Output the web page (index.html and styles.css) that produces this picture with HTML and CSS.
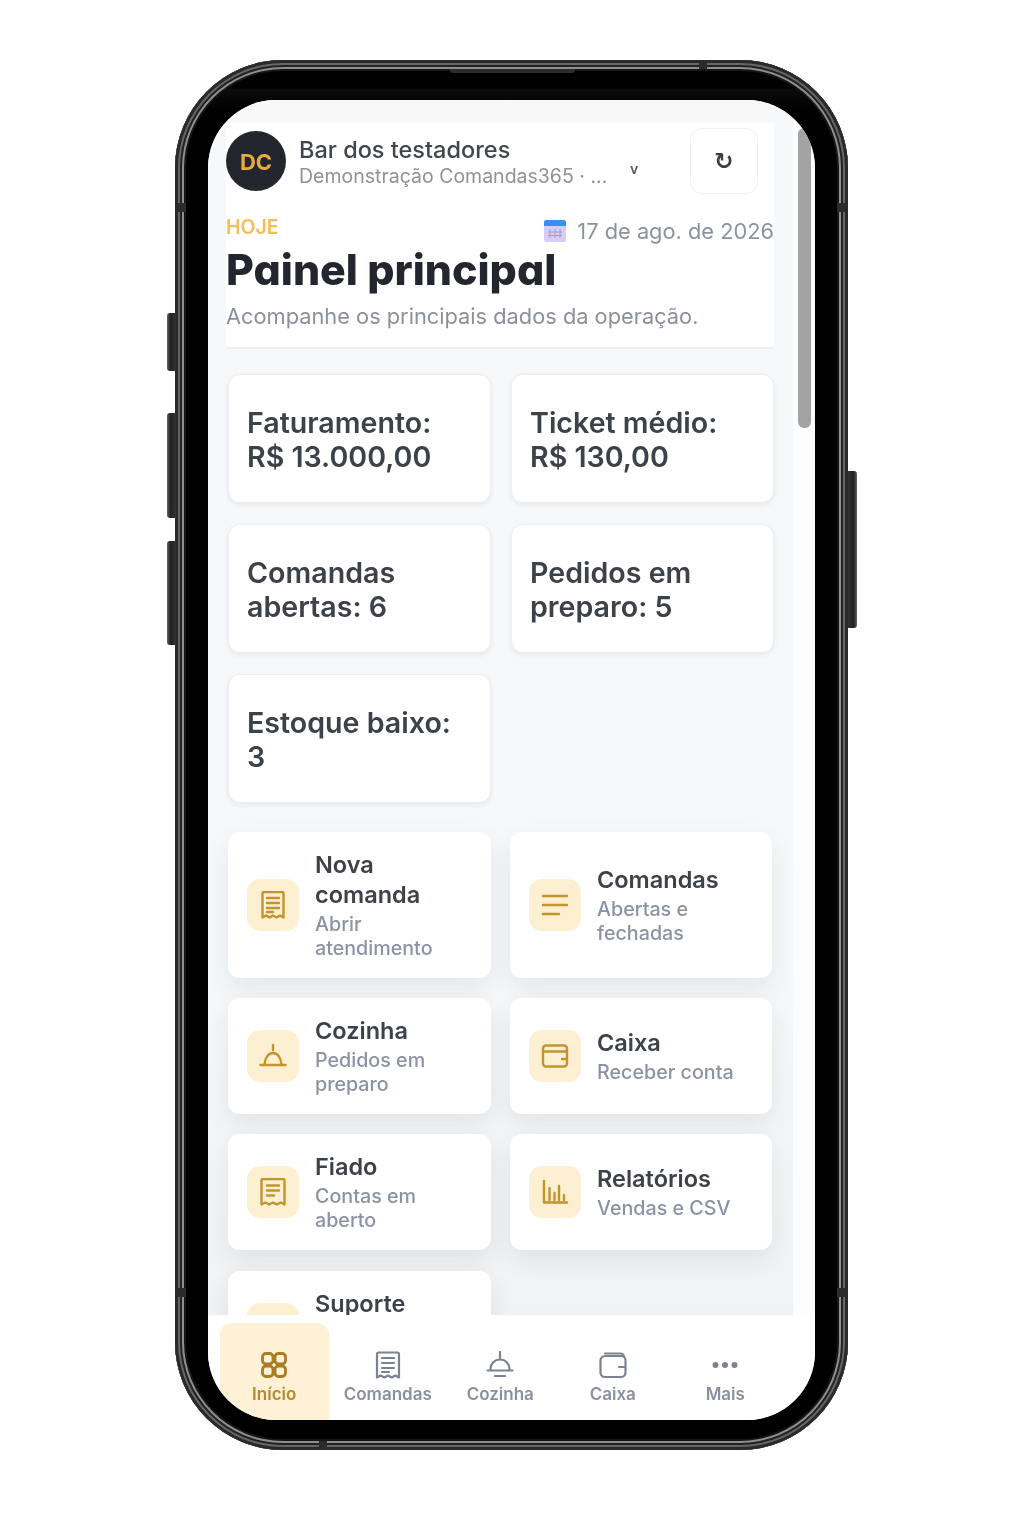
FILE: index.html
```html
<!DOCTYPE html>
<html lang="pt-BR">
<head>
<meta charset="utf-8">
<title>Painel principal</title>
<link rel="stylesheet" href="styles.css">
</head>
<body>
<div class="phone">
  <span class="side side-a"></span><span class="side side-b"></span><span class="side side-c"></span><span class="side side-d"></span>
  <span class="band band-lt"></span><span class="band band-rt"></span><span class="band band-lb"></span><span class="band band-rb"></span><span class="band band-t"></span><span class="band band-b"></span>
  <span class="speaker"></span>
  <div class="bezel">
    <div class="screen">
      <div class="body">
        <main class="main">
          <section class="top">
            <header class="account">
              <div class="avatar">DC</div>
              <div class="account-text">
                <div class="account-name">Bar dos testadores</div>
                <div class="account-sub">Demonstração Comandas365 · ...</div>
              </div>
              <span class="chev">v</span>
              <button class="refresh">↻</button>
            </header>
            <div class="meta">
              <span class="today">HOJE</span>
              <span class="date">
                <svg class="cal" viewBox="0 0 22 22"><rect y="0" width="22" height="22" rx="2.500" fill="#d8cdf2"/><path d="M0 2.500A2.500 2.500 0 0 1 2.500 0h17A2.500 2.500 0 0 1 22 2.500V6H0z" fill="#3b8df0"/><path d="M6 9v9M11 9v9M16 9v9M4 12h14M4 15.500h14" stroke="#a79cc8" stroke-width="1" fill="none"/></svg>
                17 de ago. de 2026
              </span>
            </div>
            <h1 class="title">Painel principal</h1>
            <p class="lead">Acompanhe os principais dados da operação.</p>
          </section>

          <section class="stats">
            <div class="stat">Faturamento:<br>R$ 13.000,00</div>
            <div class="stat">Ticket médio:<br>R$ 130,00</div>
            <div class="stat">Comandas<br>abertas: 6</div>
            <div class="stat">Pedidos em<br>preparo: 5</div>
            <div class="stat">Estoque baixo:<br>3</div>
          </section>

          <section class="actions">
            <a class="action">
              <span class="tile"><svg viewBox="0 0 28 28"><path d="M3.500 26.500V2.500A1.500 1.500 0 0 1 5 1h18a1.500 1.500 0 0 1 1.500 1.500v24l-3.500-2-3.500 2-3.500-2-3.500 2-3.500-2z"/><path d="M8 7h12M8 12h12M8 17h12M8 21h6"/></svg></span>
              <span class="action-text"><strong>Nova comanda</strong><small>Abrir atendimento</small></span>
            </a>
            <a class="action">
              <span class="tile"><svg viewBox="0 0 28 28"><path d="M2 5h24M2 14h24M2 23h16"/></svg></span>
              <span class="action-text"><strong>Comandas</strong><small>Abertas e fechadas</small></span>
            </a>
            <a class="action">
              <span class="tile"><svg viewBox="0 0 28 28"><path d="M14 3v5M5.500 22.500C6 15.500 9.500 11 14 11s8 4.500 8.500 11.500M1.500 23h25"/></svg></span>
              <span class="action-text"><strong>Cozinha</strong><small>Pedidos em preparo</small></span>
            </a>
            <a class="action">
              <span class="tile"><svg viewBox="0 0 28 28"><rect x="2" y="3.500" width="24" height="21" rx="3"/><path d="M2 9.500h24M21 17h5"/></svg></span>
              <span class="action-text"><strong>Caixa</strong><small>Receber conta</small></span>
            </a>
            <a class="action">
              <span class="tile"><svg viewBox="0 0 28 28"><path d="M2.500 26.500V2.500A1.500 1.500 0 0 1 4 1h20a1.500 1.500 0 0 1 1.500 1.500v24l-3.800-2-3.800 2-3.900-2-3.900 2-3.800-2z"/><path d="M8 7.500h12M8 12.500h12M8 17.500h7"/></svg></span>
              <span class="action-text"><strong>Fiado</strong><small>Contas em aberto</small></span>
            </a>
            <a class="action">
              <span class="tile"><svg viewBox="0 0 28 28"><path d="M3 3v21.500h23M8.500 22V10M13.500 22v-7M18 22V8M23 22v-5"/></svg></span>
              <span class="action-text"><strong>Relatórios</strong><small>Vendas e CSV</small></span>
            </a>
            <a class="action action-cut">
              <span class="tile"></span>
              <span class="action-text"><strong>Suporte</strong></span>
            </a>
          </section>
        </main>
        <aside class="gutter"><span class="thumb"></span></aside>
      </div>
      <nav class="nav">
        <a class="tab tab-on"><svg viewBox="0 0 28 28"><rect x="2.500" y="2.500" width="10.500" height="10.500" rx="3.500"/><rect x="15" y="2.500" width="10.500" height="10.500" rx="3.500"/><rect x="2.500" y="15" width="10.500" height="10.500" rx="3.500"/><rect x="15" y="15" width="10.500" height="10.500" rx="3.500"/></svg>Início</a>
        <a class="tab"><svg viewBox="0 0 28 28"><path d="M3 26.500V3A1.500 1.500 0 0 1 4.500 1.500h19A1.500 1.500 0 0 1 25 3v23.500l-3.600-2-3.700 2-3.700-2-3.700 2-3.700-2z"/><path d="M8 7h12M8 12h12M8 17h12M8 21h7"/></svg>Comandas</a>
        <a class="tab"><svg viewBox="0 0 28 28"><path d="M14 1v6M4.500 18a9.500 9.500 0 0 1 19 0M1.500 19.500h25M9 25h10"/></svg>Cozinha</a>
        <a class="tab"><svg viewBox="0 0 28 28"><path d="M6 2.500h15.500A3.500 3.500 0 0 1 25 6"/><rect x="1.500" y="5" width="25" height="21" rx="4.500"/><path d="M20 16h6"/></svg>Caixa</a>
        <a class="tab"><svg viewBox="0 0 28 28"><circle class="dot" cx="4.500" cy="14" r="3"/><circle class="dot" cx="14" cy="14" r="3"/><circle class="dot" cx="23.500" cy="14" r="3"/></svg>Mais</a>
      </nav>
    </div>
  </div>
</div>
</body>
</html>
```
FILE: styles.css
```css
* { box-sizing: border-box; }
html, body { margin: 0; background: #fff; }
body { padding: 60px 0 0 175px; height: 1536px; overflow: hidden; font-family: Inter, "Noto Sans", sans-serif; color: #353a44; }

.phone {
  position: relative; width: 673px; height: 1390px; padding: 11px;
  border-radius: 108px; background: #161616;
  box-shadow: inset 0 0 0 3px #2a2a2a, inset 0 0 0 5px #666, inset 0 0 0 7px #222, inset 0 0 0 9px #8e8e8e;
}
.side { position: absolute; width: 9px; border-radius: 3px 0 0 3px; background: linear-gradient(90deg, #666, #222 35%, #333); }
.side-a { left: -8px; top: 253px; height: 58px; }
.side-b { left: -8px; top: 353px; height: 105px; }
.side-c { left: -8px; top: 481px; height: 104px; }
.side-d { right: -9px; top: 411px; height: 157px; border-radius: 0 3px 3px 0; background: linear-gradient(270deg, #666, #222 35%, #333); }
.band { position: absolute; background: #2b2b2b; }
.band-lt, .band-rt, .band-lb, .band-rb { width: 11px; height: 9px; }
.band-lt { left: 0; top: 143px; }
.band-rt { right: 0; top: 143px; }
.band-lb { left: 0; top: 1228px; }
.band-rb { right: 0; top: 1228px; }
.band-t { left: 524px; top: 0; width: 8px; height: 9px; }
.band-b { left: 144px; bottom: 0; width: 8px; height: 9px; }
.speaker { position: absolute; left: 275px; top: 9px; width: 125px; height: 4px; border-radius: 0 0 3px 3px; background: #2c2c2c; z-index: 1; }

.bezel { height: 100%; padding: 29px 22px 19px; border-radius: 97px; background: linear-gradient(#000 0, #000 17px, #0c0c0c 18px, #000 40px); }
.screen { display: flex; flex-direction: column; width: 607px; height: 1320px; border-radius: 68px; overflow: hidden; background: #fff; }

.body { flex: 1; min-height: 0; display: flex; filter: blur(.4px); }
.main { flex: 1; min-width: 0; overflow: hidden; padding: 23px 19px 0 18px; background: linear-gradient(#f6f8fa 70%, #f1f2f4); }
.gutter { flex: none; width: 22px; padding: 28px 4px 0 5px; background: #fdfdfe; }
.thumb { display: block; height: 300px; border-radius: 6px; background: #a3a3a3; }

.top { background: #fff; padding-top: 5px; padding-bottom: 16px; border-bottom: 2px solid #eceef1; }
.account { display: flex; align-items: center; }
.avatar { flex: none; width: 60px; height: 60px; padding-top: 2px; border-radius: 50%; background: #23262d; color: #eaaa3c; display: flex; align-items: center; justify-content: center; font-size: 22px; font-weight: 700; }
.account-text { margin-left: 13px; width: 322px; padding-top: 2px; }
.account-name { font-size: 23.500px; line-height: 28px; font-weight: 500; color: #41454e; }
.account-sub { font-size: 19.500px; line-height: 24px; color: #8d929d; }
.chev { flex: none; width: 16px; margin-left: 5px; text-align: center; margin-top: 15px; font-size: 14px; font-weight: 600; color: #555a64; }
.refresh { flex: none; margin-left: 48px; width: 68px; height: 66px; padding: 0; border: 1.500px solid #eef0f3; border-radius: 12px; background: #fff; font-family: "DejaVu Sans", sans-serif; font-size: 23px; font-weight: 700; color: #3a3d44; }

.meta { display: flex; justify-content: space-between; margin-top: 22px; height: 30px; }
.today { font-size: 19.500px; line-height: 22px; font-weight: 600; color: #f3bd58; }
.date { display: flex; align-items: center; gap: 11px; font-size: 21.800px; line-height: 30px; color: #8d929d; }
.cal { width: 22px; height: 22px; }
.title { margin: 0; font-size: 42.800px; line-height: 48px; font-weight: 800; color: #23262f; font-feature-settings: "cv11"; }
.lead { margin: 7px 0 0; font-size: 21.800px; line-height: 30px; color: #8b919c; }

.stats { display: grid; grid-template-columns: 263px 263px; gap: 21px 20px; margin: 25px 0 0 2px; }
.stat { height: 129px; padding: 31px 18px; background: #fff; border: 1px solid #eceff2; border-radius: 12px; box-shadow: 0 2px 5px rgba(30, 40, 60, .07); font-size: 28.600px; line-height: 34px; font-weight: 600; color: #3d4149; }

.actions { display: grid; grid-template-columns: 263px 262px; gap: 20px 19px; margin: 29px 0 0 2px; }
.action { display: flex; align-items: center; gap: 16px; padding: 18px 19px; background: #fff; border-radius: 12px; box-shadow: 0 10px 26px rgba(30, 40, 60, .08); }
.action-cut { align-items: flex-start; height: 116px; margin-top: 1px; }
.action-cut .tile { margin-top: 14px; }
.tile { flex: none; width: 52px; height: 52px; border-radius: 13px; background: #fdefd2; display: flex; align-items: center; justify-content: center; }
.tile svg { width: 28px; height: 28px; fill: none; stroke: #c2952c; stroke-width: 2.400; stroke-linecap: round; stroke-linejoin: round; }
.action-text { min-width: 0; }
.action-text strong { display: block; font-size: 23.500px; line-height: 30px; font-weight: 600; color: #3d4149; }
.action-text small { display: block; margin-top: 2px; font-size: 19.700px; line-height: 24px; font-weight: 500; color: #8b93a3; }

.nav { flex: none; height: 105px; display: grid; grid-template-columns: repeat(5, 112.500px); padding: 8px 0 0 11px; background: #fff; filter: blur(.4px); }
.tab { display: flex; flex-direction: column; align-items: center; padding-top: 28px; font-size: 17px; line-height: 20px; font-weight: 600; color: #8a90a0; gap: 5px; }
.tab svg { width: 28px; height: 28px; fill: none; stroke: #7d8290; stroke-width: 2.200; stroke-linecap: round; stroke-linejoin: round; }
.tab .dot { fill: #7d8290; stroke: none; }
.tab-on { background: #fff1d6; border-radius: 12px 12px 0 0; margin: 0 3px 0 1px; color: #b68a2c; }
.tab-on svg { stroke: #a97e22; stroke-width: 2.800; }
```
